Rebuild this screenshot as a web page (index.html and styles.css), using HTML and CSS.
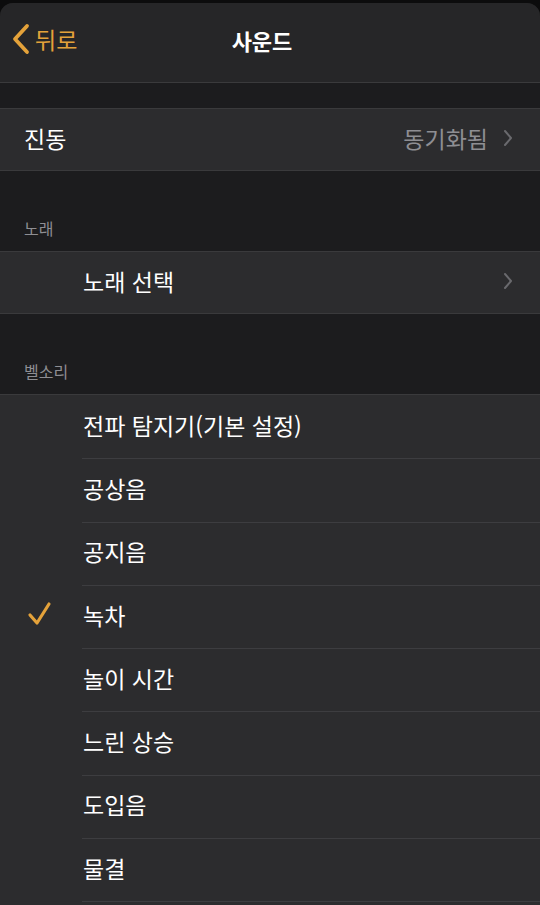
FILE: index.html
```html
<!DOCTYPE html>
<html lang="ko">
<head>
    <meta charset="UTF-8">
    <meta name="viewport" content="width=device-width, initial-scale=1.0">
    <title>사운드</title>
    <link rel="stylesheet" href="styles.css">
</head>
<body>
    <div class="sheet">
        <header class="navbar">
            <a class="back" href="#">
                <svg width="20" height="32" viewBox="0 0 20 32">
                    <path d="M16 3 L4 16 L16 29" fill="none" stroke="#e4a23a" stroke-width="3.8" stroke-linecap="round" stroke-linejoin="round"/>
                </svg>
                <span>뒤로</span>
            </a>
            <h1>사운드</h1>
        </header>

        <div class="gap small"></div>
        <div class="group">
            <div class="row">
                <span class="label">진동</span>
                <span class="detail">동기화됨</span>
                <svg class="chevron" width="10" height="18" viewBox="0 0 10 18">
                    <path d="M2 2 L8 9 L2 16" fill="none" stroke="#69696d" stroke-width="2" stroke-linecap="round" stroke-linejoin="round"/>
                </svg>
            </div>
        </div>

        <div class="section-title">노래</div>
        <div class="group">
            <div class="row indented">
                <span class="label">노래 선택</span>
                <svg class="chevron" width="10" height="18" viewBox="0 0 10 18">
                    <path d="M2 2 L8 9 L2 16" fill="none" stroke="#69696d" stroke-width="2" stroke-linecap="round" stroke-linejoin="round"/>
                </svg>
            </div>
        </div>

        <div class="section-title">벨소리</div>
        <div class="group list">
            <div class="row indented"><span class="label">전파 탐지기(기본 설정)</span></div>
            <div class="row indented"><span class="label">공상음</span></div>
            <div class="row indented"><span class="label">공지음</span></div>
            <div class="row indented checked">
                <svg class="check" width="26" height="26" viewBox="0 0 26 26">
                    <path d="M3 14 L10 22 L22 3" fill="none" stroke="#e4a23a" stroke-width="3.2" stroke-linecap="round" stroke-linejoin="round"/>
                </svg>
                <span class="label">녹차</span>
            </div>
            <div class="row indented"><span class="label">놀이 시간</span></div>
            <div class="row indented"><span class="label">느린 상승</span></div>
            <div class="row indented"><span class="label">도입음</span></div>
            <div class="row indented"><span class="label">물결</span></div>
            <div class="row indented"></div>
        </div>
    </div>
</body>
</html>
```

FILE: styles.css
```css
* {
    margin: 0;
    padding: 0;
    box-sizing: border-box;
}
body {
    background-color: #0c0c0d;
    font-family: "Noto Sans CJK KR", "Noto Sans", sans-serif;
    color: #fff;
    height: 905px;
    overflow: hidden;
    padding-top: 3px;
}
.sheet {
    background-color: #1c1c1e;
    border-radius: 13px 13px 0 0;
    overflow: hidden;
    height: 902px;
}
.navbar {
    background-color: #262628;
    height: 80px;
    border-bottom: 1px solid #3a3a3c;
    display: flex;
    align-items: center;
    justify-content: center;
    position: relative;
    padding-bottom: 5px;
}
.navbar h1 {
    font-size: 22px;
    font-weight: 700;
    margin-right: 16px;
}
.back {
    position: absolute;
    left: 11px;
    top: 19px;
    display: flex;
    align-items: center;
    gap: 4px;
    color: #e4a23a;
    text-decoration: none;
    font-size: 23px;
}
.gap.small {
    height: 25px;
}
.group {
    background-color: #2c2c2e;
    border-top: 1px solid #3a3a3c;
    border-bottom: 1px solid #3a3a3c;
}
.row {
    height: 61px;
    display: flex;
    align-items: center;
    padding-left: 24px;
    padding-right: 27px;
    padding-bottom: 4px;
    position: relative;
    font-size: 23px;
}
.row.indented {
    padding-left: 83px;
}
.row .label {
    flex: 1;
}
.detail {
    color: #8e8e93;
    margin-right: 15px;
}
.section-title {
    color: #8e8e93;
    font-size: 16px;
    padding: 0 24px 11px;
    height: 80px;
    display: flex;
    align-items: flex-end;
}
.list .row {
    height: 63.3px;
}
.list .row + .row::before {
    content: "";
    position: absolute;
    left: 82px;
    right: 0;
    top: 0;
    height: 1px;
    background-color: #3d3d40;
}
.check {
    position: absolute;
    left: 27px;
    top: 16px;
}
```
